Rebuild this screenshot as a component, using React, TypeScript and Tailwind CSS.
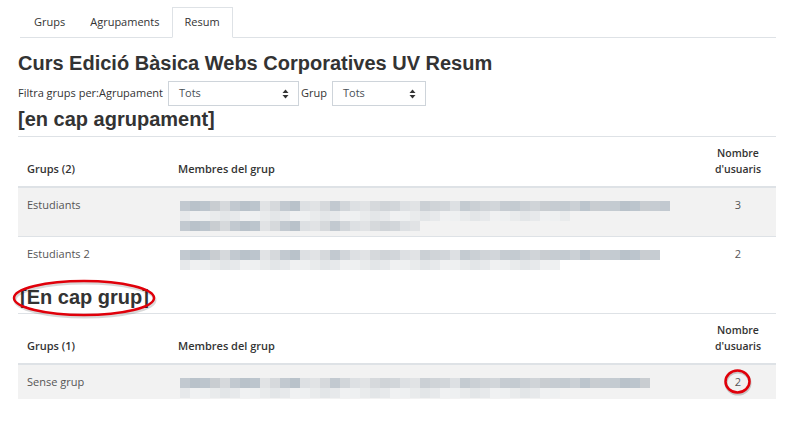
import React from "react";

const blurA = [
  "bg-[#c2c9d0]", "bg-[#d0d4d8]", "bg-[#bcc5cd]", "bg-[#dde0e3]", "bg-[#c6ccd2]",
  "bg-[#d6d9dc]", "bg-[#cbd0d5]", "bg-[#b9c2ca]", "bg-[#d2d6da]", "bg-[#c9cdd1]",
  "bg-[#e1e3e5]", "bg-[#c4cbd1]",
];
const blurB = [
  "bg-[#e7e9eb]", "bg-[#eef0f1]", "bg-[#e3e6e8]", "bg-[#f0f1f2]", "bg-[#e9ebec]",
];

const Blur = ({ width, halo = true }: { width: number; halo?: boolean }) => {
  const n = Math.round(width / 10);
  return (
    <div className="flex flex-col">
      <div className="flex">
        {Array.from({ length: n }).map((_, i) => (
          <div key={i} className={`h-[10px] w-[10px] ${blurA[(i * 7 + (i >> 2)) % blurA.length]}`} />
        ))}
      </div>
      {halo && (
        <div className="flex">
          {Array.from({ length: Math.max(1, Math.round(n * 0.8)) }).map((_, i) => (
            <div key={i} className={`h-[10px] w-[10px] ${blurB[(i * 3) % blurB.length]}`} />
          ))}
        </div>
      )}
    </div>
  );
};

const Select = ({ width }: { width: string }) => (
  <div className={`${width} flex h-[25px] items-center justify-between border border-[#ced4da] bg-white pl-[10px] pr-[9px] text-[11px] text-[#495057]`}>
    <span>Tots</span>
    <svg width="7" height="10" viewBox="0 0 7 10">
      <path d="M3.5 0.5 L6.5 4 L0.5 4 Z" fill="#333" />
      <path d="M3.5 9.5 L6.5 6 L0.5 6 Z" fill="#333" />
    </svg>
  </div>
);

type Row = { name: string; lines: number[]; count: string; shaded: boolean; h: string; ring?: boolean };

const GroupTable = ({ title, rows }: { title: string; rows: Row[] }) => (
  <table className="w-full table-fixed border-collapse text-[11px]">
    <colgroup>
      <col className="w-[151px]" />
      <col />
      <col className="w-[76px]" />
    </colgroup>
    <thead>
      <tr className="border-t border-b-2 border-t-[#dee2e6] border-b-[#dee2e6] text-[#333]">
        <th className="h-[50px] pl-[9px] pb-[9px] text-left align-bottom font-semibold leading-[16px]">{title}</th>
        <th className="pl-[9px] pb-[9px] text-left align-bottom font-semibold leading-[16px]">Membres del grup</th>
        <th className="pb-[9px] text-center align-bottom text-[10.5px] font-semibold leading-[16px]">
          Nombre
          <br />
          d'usuaris
        </th>
      </tr>
    </thead>
    <tbody>
      {rows.map((r, i) => (
        <tr key={i} className={`${r.shaded ? "bg-[#f2f2f2]" : "bg-white"} ${i > 0 ? "border-t border-[#dee2e6]" : ""} text-[#555]`}>
          <td className={`${r.h} pl-[9px] pt-[9px] align-top leading-[16px]`}>{r.name}</td>
          <td className="pt-[13px] pl-[11px] align-top">
            <div className="flex flex-col">
              {r.lines.map((w, j) => (
                <Blur key={j} width={w} halo={j === 0} />
              ))}
            </div>
          </td>
          <td className="pt-[9px] align-top text-center leading-[16px]">
            <span className="relative inline-block">
              {r.count}
              {r.ring && (
                <svg className="absolute left-1/2 top-1/2 -translate-x-1/2 -translate-y-1/2" width="32" height="32" viewBox="0 0 32 32">
                  <ellipse cx="16" cy="17" rx="12" ry="11" fill="none" stroke="#000" strokeOpacity="0.18" strokeWidth="3" />
                  <ellipse cx="15.5" cy="15.5" rx="12" ry="11" fill="none" stroke="#e0000a" strokeWidth="2.5" />
                </svg>
              )}
            </span>
          </td>
        </tr>
      ))}
    </tbody>
  </table>
);

export default function App() {
  return (
    <div className="h-[430px] w-[796px] bg-white pl-[18px] pr-[20px] font-['Open_Sans',sans-serif] text-[#333]">
      {/* Tabs */}
      <div className="ml-[2px] mt-[7px] flex h-[31px] border-b border-[#dee2e6] text-[11px]">
        <div className="flex items-center pl-[14px] pr-[13px]">Grups</div>
        <div className="flex items-center px-[12px]">Agrupaments</div>
        <div className="-mb-px flex items-center border border-b-white border-[#dee2e6] bg-white px-[12px]">Resum</div>
      </div>

      <h2 className="mt-[13px] h-[24px] font-['Liberation_Sans',Arial,sans-serif] text-[20px] font-bold leading-[24px] text-[#333]">
        Curs Edició Bàsica Webs Corporatives UV Resum
      </h2>

      <div className="mt-[6px] flex h-[25px] items-center text-[11px]">
        <span className="mr-[5px]">Filtra grups per:Agrupament</span>
        <Select width="w-[131px]" />
        <span className="ml-[2px] mr-[5px]">Grup</span>
        <Select width="w-[94px]" />
      </div>

      <h3 className="mt-px h-[24px] font-['Liberation_Sans',Arial,sans-serif] text-[20px] font-bold leading-[24px] text-[#333]">
        [en cap agrupament]
      </h3>

      <div className="mt-[5px]">
        <GroupTable
          title="Grups (2)"
          rows={[
            { name: "Estudiants", lines: [490, 240], count: "3", shaded: true, h: "h-[50px]" },
            { name: "Estudiants 2", lines: [480], count: "2", shaded: false, h: "h-[33px]" },
          ]}
        />
      </div>

      <div className="relative mt-[15px] h-[28px]">
        <h3 className="pl-[2px] font-['Liberation_Sans',Arial,sans-serif] text-[20px] font-bold leading-[24px] text-[#333]">
          [En cap grup]
        </h3>
        <svg className="absolute -left-[8px] -top-[7px]" width="150" height="42" viewBox="0 0 150 42">
          <ellipse cx="75" cy="22" rx="70" ry="17" fill="none" stroke="#000" strokeOpacity="0.15" strokeWidth="3" />
          <ellipse cx="74" cy="20" rx="70" ry="17" fill="none" stroke="#e0000a" strokeWidth="2.5" />
        </svg>
      </div>

      <GroupTable
        title="Grups (1)"
        rows={[{ name: "Sense grup", lines: [470], count: "2", shaded: true, h: "h-[35px]", ring: true }]}
      />
    </div>
  );
}
